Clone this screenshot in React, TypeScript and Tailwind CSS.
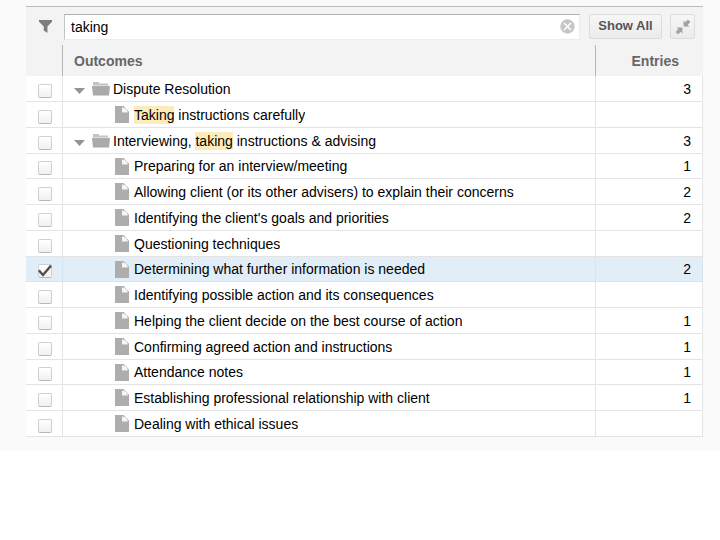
import { useState } from "react";

type Row = {
  label: string;
  folder?: boolean;
  entries?: number;
};

const ROWS: Row[] = [
  { label: "Dispute Resolution", folder: true, entries: 3 },
  { label: "Taking instructions carefully" },
  { label: "Interviewing, taking instructions & advising", folder: true, entries: 3 },
  { label: "Preparing for an interview/meeting", entries: 1 },
  { label: "Allowing client (or its other advisers) to explain their concerns", entries: 2 },
  { label: "Identifying the client's goals and priorities", entries: 2 },
  { label: "Questioning techniques" },
  { label: "Determining what further information is needed", entries: 2 },
  { label: "Identifying possible action and its consequences" },
  { label: "Helping the client decide on the best course of action", entries: 1 },
  { label: "Confirming agreed action and instructions", entries: 1 },
  { label: "Attendance notes", entries: 1 },
  { label: "Establishing professional relationship with client", entries: 1 },
  { label: "Dealing with ethical issues" },
];

function FunnelIcon() {
  return (
    <svg width="13" height="13" viewBox="0 0 12 12" fill="#7d7d7d" aria-hidden="true">
      <path d="M0 0h12v1.5L7.8 6v6L4.4 9.8V6L0 1.5z" />
    </svg>
  );
}

function ClearIcon() {
  return (
    <svg width="15" height="15" viewBox="0 0 15 15" aria-hidden="true">
      <circle cx="7.5" cy="7.5" r="7.2" fill="#c6c6c6" />
      <path d="M4 4l7 7M11 4l-7 7" stroke="#fff" strokeWidth="1.5" />
    </svg>
  );
}

// Two arrows pointing at each other along the diagonal
function CollapseIcon() {
  return (
    <svg width="16" height="16" viewBox="0 0 16 16" aria-hidden="true">
      <path
        d="M8.6 1.6v5.8h5.8l-1.7-1.7 2.7-2.6L12.9.6l-2.6 2.7zM7.4 14.4V8.6H1.6l1.7 1.7-2.7 2.6 2.5 2.5 2.6-2.7z"
        fill="#a2a2a2"
      />
    </svg>
  );
}

function FolderIcon() {
  return (
    <svg width="18" height="14" viewBox="0 0 18 14" className="shrink-0" aria-hidden="true">
      <path d="M1 0h6v1.6h9V4H1z" fill="#c4c4c4" />
      <path d="M0 4h18l-1 9.5H1z" fill="#aaa" />
      <path d="M0 3.6h18" stroke="#e6e6e6" strokeWidth="0.8" />
    </svg>
  );
}

function FileIcon() {
  return (
    <svg width="14" height="17" viewBox="0 0 14 17" className="shrink-0" aria-hidden="true">
      <path d="M0 0h8.5L14 5.5V17H0z" fill="#adadad" />
      <path d="M7 1.4h1.2q4.4 1.4 4.6 5H7z" fill="#f5f5f5" />
    </svg>
  );
}

// Wraps every case-insensitive hit of the search term in a yellow mark
function Highlight({ text, term }: { text: string; term: string }) {
  const at = term ? text.toLowerCase().indexOf(term.toLowerCase()) : -1;
  if (at < 0) return <>{text}</>;
  return (
    <>
      {text.slice(0, at)}
      <mark className="bg-[#fdebb9] py-px text-black">{text.slice(at, at + term.length)}</mark>
      <Highlight text={text.slice(at + term.length)} term={term} />
    </>
  );
}

export default function App() {
  const [term, setTerm] = useState("taking");
  const [checked, setChecked] = useState<string[]>(["Determining what further information is needed"]);

  const toggle = (label: string) => {
    setChecked((prev) => (prev.includes(label) ? prev.filter((l) => l !== label) : [...prev, label]));
  };

  return (
    <div className="min-h-screen bg-white font-['Liberation_Sans',Arial,sans-serif] text-sm text-black">
      <div className="bg-[#fafafa] pt-1.5 pr-[17px] pb-3.5 pl-[26px]">
        <div className="border-t border-[#bdbdbd] bg-[#f3f3f3]">
          {/* Filter bar */}
          <div className="flex h-[38px] items-center pt-px pr-2">
            <div className="flex w-[38px] shrink-0 justify-center">
              <FunnelIcon />
            </div>
            <div className="flex h-[26px] flex-1 items-center border border-[#ececec] border-t-[#b0b0b0] border-l-[#c4c4c4] bg-white pr-1">
              <input
                type="text"
                aria-label="Filter outcomes"
                value={term}
                onChange={(e) => setTerm(e.target.value)}
                className="h-full min-w-0 flex-1 px-1.5 outline-none"
              />
              <button type="button" aria-label="Clear filter" onClick={() => setTerm("")}>
                <ClearIcon />
              </button>
            </div>
            <button
              type="button"
              onClick={() => setTerm("")}
              className="ml-[9px] h-[25px] w-[73px] rounded-xs border border-[#dcdcdc] bg-linear-to-b from-[#f6f6f6] to-[#ebebeb] text-[13px] font-bold text-[#555]"
            >
              Show All
            </button>
            <button
              type="button"
              aria-label="Collapse all"
              className="ml-2 flex h-[25px] w-[25px] items-center justify-center rounded-xs border border-[#dcdcdc] bg-linear-to-b from-[#f6f6f6] to-[#ebebeb]"
            >
              <CollapseIcon />
            </button>
          </div>

          <table className="w-full table-fixed border-separate border-spacing-0">
            <colgroup>
              <col className="w-[37px]" />
              <col />
              <col className="w-[107px]" />
            </colgroup>
            <thead>
              <tr className="h-[31px] text-[#666]">
                <td className="border-r border-[#b5b5b5]" />
                <th scope="col" className="border-r border-[#b5b5b5] pl-[11px] text-left font-bold">
                  Outcomes
                </th>
                <th scope="col" className="pr-6 text-right font-bold">
                  Entries
                </th>
              </tr>
            </thead>
            <tbody>
              {ROWS.map((row, i) => {
                const on = checked.includes(row.label);
                return (
                  <tr
                    key={row.label}
                    className={`h-[26px] nth-[4n]:h-[25px] *:border-r *:border-b ${on ? "bg-[#e1eef7] *:border-[#d9e5ee]" : "bg-white *:border-[#e4e4e4]"}`}
                  >
                    <td>
                      <div className="flex justify-center pt-1 pl-0.5">
                        <input
                          id={`row-${i}`}
                          type="checkbox"
                          checked={on}
                          onChange={() => toggle(row.label)}
                          className="h-3.5 w-3.5 appearance-none rounded-xs border border-[#d0d0d0] border-b-[#b8b8b8] bg-linear-to-b from-white to-[#f0f0f0]"
                        />
                        {on && (
                          <svg width="14" height="14" viewBox="0 0 14 14" className="pointer-events-none absolute" aria-hidden="true">
                            <path d="M.8 6.4l4.2 4.6L13 1.6" fill="none" stroke="#505050" strokeWidth="2.4" />
                          </svg>
                        )}
                      </div>
                    </td>
                    <td>
                      <div className={`flex h-6 items-center ${row.folder ? "pl-[11px]" : "pl-[52px]"}`}>
                        {row.folder ? (
                          <>
                            <button type="button" aria-label={`Collapse ${row.label}`} className="mr-[7px] pt-1">
                              <svg width="11" height="6" viewBox="0 0 11 6" aria-hidden="true">
                                <path d="M0 0h11L5.5 6z" fill="#949494" />
                              </svg>
                            </button>
                            <FolderIcon />
                          </>
                        ) : (
                          <FileIcon />
                        )}
                        <label htmlFor={`row-${i}`} className={`truncate leading-5 ${row.folder ? "pl-[3px]" : "pl-[5px]"}`}>
                          <Highlight text={row.label} term={term} />
                        </label>
                      </div>
                    </td>
                    <td className="pr-[11px] text-right leading-5">{row.entries}</td>
                  </tr>
                );
              })}
            </tbody>
          </table>
        </div>
      </div>
    </div>
  );
}
